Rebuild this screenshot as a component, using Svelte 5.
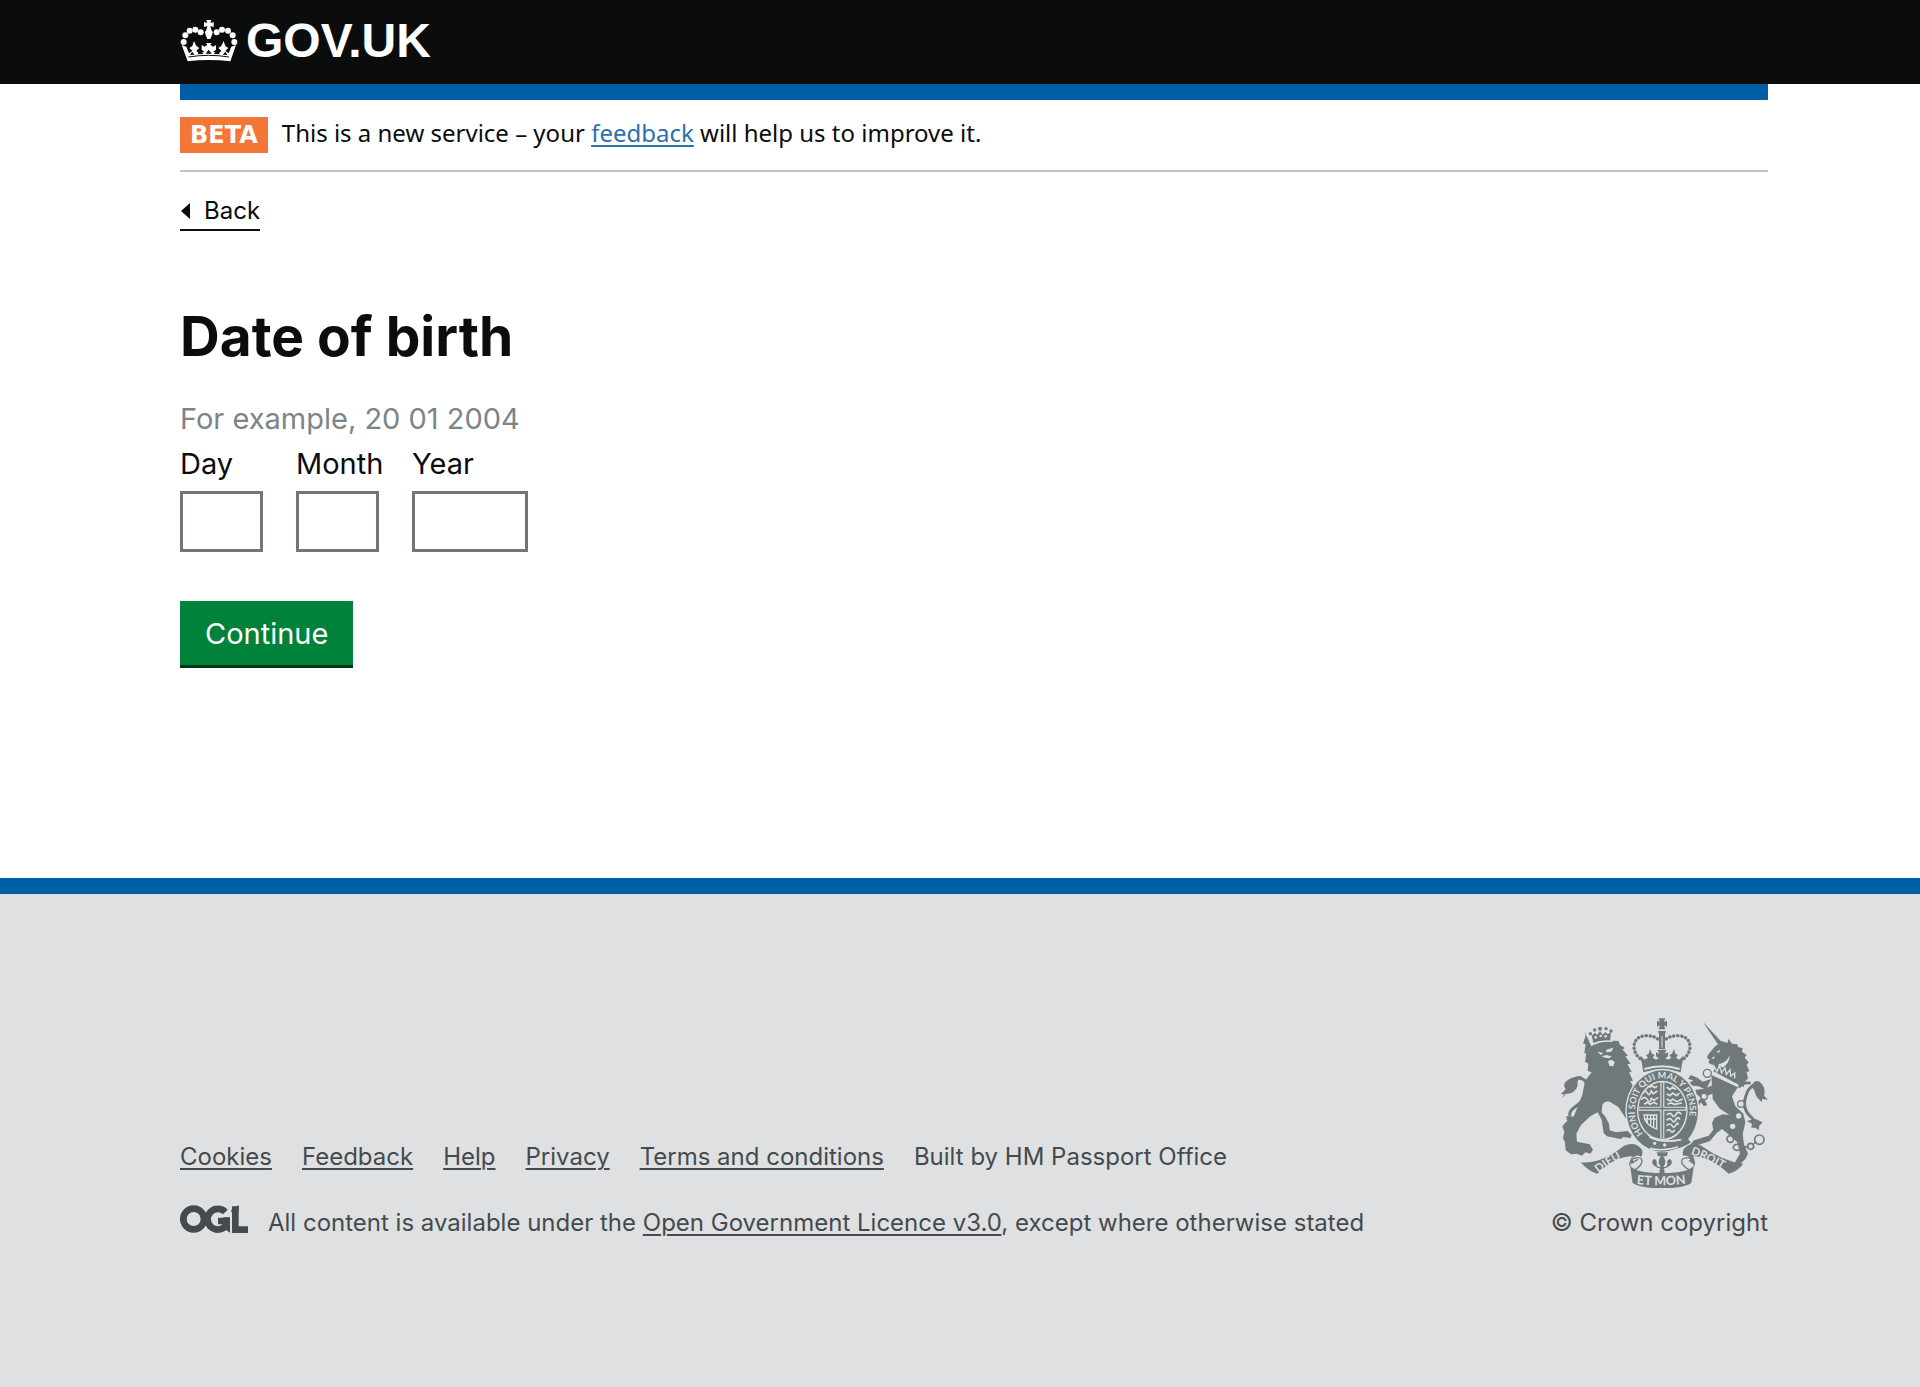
<script>
  const links = ['Cookies', 'Feedback', 'Help', 'Privacy', 'Terms and conditions'];
  const fields = [
    { id: 'day', label: 'Day' },
    { id: 'month', label: 'Month' },
    { id: 'year', label: 'Year' }
  ];
  // beads along the two arches of the header crown
  const beads = [[42, 119], [47, 99], [60, 85], [77, 82], [93, 90], [141, 90], [157, 82], [175, 85], [189, 99], [194, 119]];
</script>

<div class="page">
  <header class="top">
    <a class="brand" href="#home">
      <svg class="crown" viewBox="31 50 174 132" aria-hidden="true">
        <g fill="#fff">
          {#each beads as [x, y]}<circle cx={x} cy={y} r="9" />{/each}
          <path d="M110 53h15l-3 9 10-3v15l-10-3 3 12q7 6 3 12l-6 15h-9l-6-15q-4-6 3-12l3-12-10 3V59l10 3z" />
          <path d="M36 128l14 5 8 20 10-8-9-8 9-6 5-15 7 15 9 6-9 8 9 10 15-7-8-6v-14l9 5 8-6-4-5h17l-4 5 8 6 9-5v14l-8 6 15 7 9-10-9-8 9-6 7-15 5 15 9 6-9 8 10 8 8-20 14-5-17 49q-64-8-128 0z" />
        </g>
        <path d="M56 164q61-10 122 0" fill="none" stroke="#0b0c0c" stroke-width="3" />
        <path d="M61 158l6-10 8 9zM83 156l9-9 10 8zM108 154l9-12 9 12zM132 155l10-8 9 9zM159 157l8-9 6 10z" fill="#0b0c0c" />
      </svg>
      <span>GOV.UK</span>
    </a>
  </header>

  <main class="wrap">
    <div class="bar"></div>
    <div class="phase">
      <strong class="tag">BETA</strong>
      <span>This is a new service – your <a href="#feedback">feedback</a> will help us to improve it.</span>
    </div>

    <a class="back" href="#back">
      <svg width="12" height="16" viewBox="0 0 12 16" aria-hidden="true"><path d="M1 8l9-8v16z" fill="#0b0c0c" /></svg>
      Back
    </a>

    <form onsubmit={(e) => e.preventDefault()}>
      <h1 id="title">Date of birth</h1>
      <p class="hint" id="hint">For example, 20 01 2004</p>
      <div class="date" role="group" aria-labelledby="title" aria-describedby="hint">
        {#each fields as f}
          <div class="field">
            <label for={f.id}>{f.label}</label>
            <input id={f.id} name={f.id} type="text" inputmode="numeric" />
          </div>
        {/each}
      </div>
      <button type="submit">Continue</button>
    </form>
  </main>

  <footer>
    <div class="wrap foot">
      <div class="meta">
        <ul>
          {#each links as l}<li><a href="#{l.toLowerCase().replaceAll(' ', '-')}">{l}</a></li>{/each}
          <li>Built by HM Passport Office</li>
        </ul>
        <div class="licence">
          <svg class="ogl" viewBox="30 225 204 84" role="img" aria-label="OGL">
            <g fill="none" stroke="#454a4d" stroke-width="20">
              <circle cx="71" cy="267" r="31" />
              <path d="M166 246a31 31 0 1 0 2 41v-14h-24" />
              <path d="M196 229v70h38" />
            </g>
            <path d="M160 262h20v46l-20-14zM184 239l22-14v22h-22z" fill="#454a4d" />
          </svg>
          <span>All content is available under the <a href="#ogl">Open Government Licence v3.0</a>, except where otherwise stated</span>
        </div>
      </div>
      <a class="copyright" href="#crown">
        <svg class="arms" viewBox="33 37 621 510" aria-hidden="true">
          <g class="d">
            <!-- lion -->
            <path d="M124 84l6 28q26-10 50-4l3-30-10 8-7-7-8 8-8-11-8 11-9-6-4 8z" />
            <circle cx="150" cy="69" r="6" /><circle cx="121" cy="84" r="5" /><circle cx="183" cy="76" r="5" /><circle cx="134" cy="73" r="5" /><circle cx="168" cy="69" r="5" />
            <path d="M124 122q28-20 82-16l4 12 14 8-6 6 16 18-8 2 16 22-10 2 14 24-9-2 12 28-8 0 10 20q-12 14-14 30l8 24q10-8 14-4l-10 14-4 20-18 8-22-34-26-16q-16-2-22 10l-2 22q14 14 22 34l2 20 20 6 34-4 12 12-4 10-20-4-10 6-40-8-10-10-6-40-12-22-22 12-28 26-14 26 2 24 38 8 10 16-8 12-14-4-12 10-14-6-18 2-16-12-2-24-6-12 4-20-6-16 12-14 20-10 16-40 12-30 8-42 20-26-12-4 2-22-10-6 4-24-6-2 4-26-8-2 8-24-4-14z" />
            <!-- unicorn -->
            <path d="M459 49l58 62-10 10z" />
            <path d="M508 114l6-8 18 6 4-12 10 14 16 2 2 8 14 4-2 10 14 10-6 8 12 14-6 8 8 18-8 4 4 18-9 10-4 16-14-6-78-42 2-18q-12-2-16-8l4-8-8-6 4-10 22-26z" />
            <path d="M484 208l80 36-18 28 10 30 24 22 6 26-8 36 4 30 12 28-8 16-22 22-10-2 2-12 14-24-8-34-24-22-22-18-16 12-20 24-42 14-14 14-12-6 20-24 44-14 14-18-4-20 8-16 24-10 20 2-30-20-20-28z" />
            <path d="M484 220l-26 8-16-12-20-8-8 12 16 4-12 8 10 8 18 2 22 10zM490 238l-30 12-24 2 4 14 14 12-16 14 10 6 4-8 10 12 10-4-8-16 4-10 30-12z" />
          </g>
          <g class="s">
            <path d="M54 338q12 16 28-2l36-46" stroke-width="12" />
            <path d="M60 332q-4-14 10-24 44-30 42-62-2-28-24-28-16 0-20 14" stroke-width="9" />
            <path d="M617 354q-6-14-18-24-26-26-8-68 12-28 32-22" stroke-width="9" />
            <path d="M566 245q16-18 36-12" stroke-width="8" />
            <circle cx="628" cy="402" r="14" stroke-width="5" /><circle cx="602" cy="422" r="9" stroke-width="5" />
            <circle cx="541" cy="400" r="10" stroke-width="5" /><ellipse cx="561" cy="425" rx="11" ry="9" stroke-width="5" />
            <path d="M612 414l8-5M580 426l14-4" stroke-width="5" />
          </g>
          <g class="d">
            <path d="M35 277l12-10-14-2 14-14q-16-22 24-36 10-4 26-4-18 10-14 28-6 26-38 26zM48 332l6 20 12-6 10 10 8-14 22-8z" />
            <path d="M602 242q18-28 34-6 12 16 6 34l12 12-18-2 0 10-16-16-8-22zM590 346l16 8-2 12 12 0 10 8 2-14 10-10-22-10z" />
          </g>
          <g class="l">
            <path d="M142 138l18 4-8 6zM168 132l22-6-6 12-14 2zM155 152l14-4 16 4-8 6-12-2zM174 166l12-4 8 8-4 12-12-2z" />
            <path d="M498 138l12-5-2 8zM504 176q26-4 36-28-2 28-24 38zM484 157l10-5-2 8z" />
            <circle cx="573" cy="295" r="9" /><circle cx="566" cy="331" r="8" /><circle cx="548" cy="362" r="8" /><circle cx="462" cy="272" r="8" /><circle cx="472" cy="203" r="10" />
            <circle cx="137" cy="95" r="4" /><circle cx="152" cy="91" r="4" /><circle cx="167" cy="92" r="4" />
          </g>
          <path d="M128 116q28-13 60-9" class="ls" stroke-width="4" />
          <path d="M482 203l80 38" class="ls" stroke-width="5" />
          <path d="M490 196l2-14 9 16 7-18 7 22 10-16 4 20 11-14 2 19 12-9 0 16" class="ls" stroke-width="4" />
          <g class="s" stroke-width="4"><circle cx="573" cy="295" r="10" /><circle cx="472" cy="203" r="12" /><circle cx="462" cy="272" r="10" /></g>

          <!-- crown over the shield -->
          <g class="s beaded">
            <path d="M280 166q-28-18-28-44 2-30 36-32 26 0 40 14" /><path d="M392 166q28-18 28-44-2-30-36-32-26 0-40 14" />
          </g>
          <g class="d">
            <path d="M326 38h20l-4 11 9-4v18l-9-4 4 12h-20l4-12-9 4V45l9 4zM324 76h24l-3 10v44h-18V86z" />
            <path d="M272 150l12 12 10-6-6-8 8-4 4-14 6 14 8 4-6 8 10 6 8-4-8-6v-12l10 4-5-12h26l-5 12 10-4v12l-8 6 8 4 10-6-6-8 8-4 6-14 4 14 8 4-6 8 10 6 12-12-8 50q-56-18-112 0z" />
          </g>
          <path d="M283 190q53-17 106 0" class="ls" stroke-width="6" />
          <path d="M336 92v34" class="ls" stroke-width="3" />

          <!-- garter -->
          <ellipse cx="337" cy="316" rx="111" ry="127" class="l" />
          <ellipse cx="337" cy="316" rx="107" ry="122" class="d" />
          <ellipse cx="337" cy="315" rx="76" ry="90" class="l" />
          <ellipse cx="337" cy="315" rx="72" ry="85" class="d" />
          <path d="M276 388q14 24 44 30h50q30-6 44-18" class="s" stroke-width="26" />
          <path d="M298 394q38 20 96 8M300 428q38 10 84-4" class="ls" stroke-width="5" />
          <g class="l"><circle cx="314" cy="413" r="5" /><circle cx="344" cy="418" r="5" /></g>
          <path id="motto" d="M279 384A82 97 0 1 1 395 384" fill="none" />
          <text class="words" font-size="27"><textPath href="#motto">HONI SOIT QUI MAL Y PENSE</textPath></text>
          <g class="ls">
            <path d="M337 230v168M266 309h142" stroke-width="12" />
            <g stroke-width="5">
              <path d="M278 264q8-14 14-2t12-6l6 8 12-8M274 282q10-14 18 0t12-4l8 6 12-8M282 296l10-6 8 6 12-6 10 6M298 246l8-6 8 6 8-4" />
              <path d="M350 244l10 8 8-8 10 8M350 264l10 6 8-8 12 8 8-8M350 280l12 6 6-6 12 8 18-8M352 296l12-4 10 4 22-4" />
              <path d="M350 328q10-10 16 0t12-2 16 0M350 344q10-10 16 0t12-2 12 0M350 360q10-10 16 0t12-2 6 0M350 376q8-8 12 0t12-4" />
            </g>
            <path d="M282 328q0 28 38 42V328zM292 330v24M302 330v32M311 330v36M284 340h36" stroke-width="4" />
          </g>
          <path d="M337 232v164M268 309h138" class="s" stroke-width="5" />

          <!-- fleur and ribbons -->
          <g class="d">
            <path d="M320 440h34l-4 12h-26zM336 448q18 18 4 36 12 0 12-10-2-12 8-14 10 6 2 18l-12 8-8 2 2 12-8 8-8-8 2-12-8-2-12-8q-8-12 2-18 10 2 8 14 0 10 12 10-14-18 4-36z" />
            <path d="M92 470q60 6 130-50 36-14 54 12 6 16-10 30l-22 14q-6-16 4-24-52 0-106 52-26-6-50-34z" />
            <path d="M580 474q-60-6-126-54-36-14-54 12-6 16 6 26l24 18q8-14-2-24 50 0 108 52 26-6 44-30z" />
            <path d="M240 478q12 24 96 24 84 0 96-24l-8 54q-22 16-88 16t-88-16z" />
          </g>
          <g class="ls" stroke-width="11"><path d="M248 462q22-16 22 4-2 12-16 20" /><path d="M420 462q-20-16-22 4 4 12 18 20" /></g>
          <g class="s" stroke-width="4"><path d="M240 480q-4-20 20-24 22 0 14 18-6 12-22 20M432 480q6-20-18-24-24 0-18 18 8 12 24 20" /></g>
          <path id="dieu" d="M146 502Q190 464 250 444" fill="none" />
          <path id="mon" d="M260 535Q336 544 424 532" fill="none" />
          <path id="droit" d="M422 445Q480 464 548 510" fill="none" />
          <g class="words" font-size="34"><text><textPath href="#dieu">DIEU</textPath></text><text font-size="38"><textPath href="#mon">ET MON</textPath></text><text><textPath href="#droit">DROIT</textPath></text></g>
        </svg>
        <span>© Crown copyright</span>
      </a>
    </div>
  </footer>
</div>

<style>
  :global(body) { margin: 0; }
  .page {
    display: flex;
    flex-direction: column;
    min-height: 100vh;
    background: #fff;
    color: #0b0c0c;
    font: 24px/36px Inter, "Noto Sans", sans-serif;
  }
  .wrap, .top { padding: 0 152px 0 180px; }
  .top { display: flex; background: #0b0c0c; height: 84px; }
  .brand {
    display: flex;
    align-items: center;
    gap: 8px;
    height: 82px;
    color: #fff;
    font: bold 48px/56px "Liberation Sans", sans-serif;
    text-decoration: none;
  }
  .crown { width: 58px; height: 44px; }
  .bar { height: 16px; background: #005ea5; }
  .phase {
    display: flex;
    align-items: flex-start;
    gap: 14px;
    padding: 17px 0;
    border-bottom: 2px solid #bfc1c3;
    font-family: "Noto Sans", sans-serif;
    line-height: 32px;
  }
  .phase a { color: #2b70ad; }
  a { text-decoration-thickness: 2px; text-underline-offset: 3px; }
  .tag {
    padding: 0 10px;
    background: #f47738;
    color: #fff;
    font: bold 24px/36px "DejaVu Sans", sans-serif;
  }
  .back {
    display: inline-flex;
    align-items: center;
    gap: 12px;
    margin-top: 23px;
    padding-bottom: 2px;
    border-bottom: 2px solid #0b0c0c;
    color: #0b0c0c;
    line-height: 32px;
    text-decoration: none;
  }
  h1 { margin: 75px 0 33px; font-size: 55px; line-height: 60px; font-weight: 700; }
  .hint { margin: 0 0 7px; color: #7c8488; font-size: 29px; line-height: 40px; }
  .date { display: grid; grid-template-columns: 83px 83px 116px; gap: 33px; }
  .field { display: flex; flex-direction: column; gap: 9px; }
  label { font-size: 29px; line-height: 36px; }
  input {
    box-sizing: border-box;
    width: 100%;
    height: 61px;
    padding: 8px;
    border: 3px solid #6f777b;
    border-radius: 0;
    background: #fff;
    font: 29px/36px Inter, sans-serif;
  }
  button {
    display: block;
    margin: 49px 0 210px;
    padding: 15px 25px 13px;
    border: 0;
    border-bottom: 3px solid #003618;
    background: #00823b;
    color: #fff;
    font: 29px/36px Inter, sans-serif;
  }
  footer {
    flex: 1;
    border-top: 16px solid #005ea5;
    background: #dee0e2;
    color: #454a4d;
  }
  footer a { color: inherit; }
  .foot {
    display: flex;
    justify-content: space-between;
    align-items: flex-end;
    padding-top: 124px;
    padding-bottom: 146px;
  }
  .meta { display: flex; flex-direction: column; gap: 30px; }
  ul { display: flex; flex-wrap: wrap; gap: 0 30px; margin: 0; padding: 0; list-style: none; }
  .licence { display: flex; align-items: flex-start; gap: 20px; }
  .ogl { width: 68px; height: 28px; flex: none; }
  .copyright { display: flex; flex-direction: column; align-items: flex-end; gap: 17px; text-decoration: none; }
  .arms { width: 207px; height: 170px; }
  .d { fill: #6f797c; }
  .l { fill: #dee0e2; }
  .s { fill: none; stroke: #6f797c; }
  .ls { fill: none; stroke: #dee0e2; }
  .beaded { stroke-width: 10px; stroke-linecap: round; stroke-dasharray: 1 11; }
  .words { fill: #dee0e2; font-family: Lato, sans-serif; font-weight: 700; }
</style>
